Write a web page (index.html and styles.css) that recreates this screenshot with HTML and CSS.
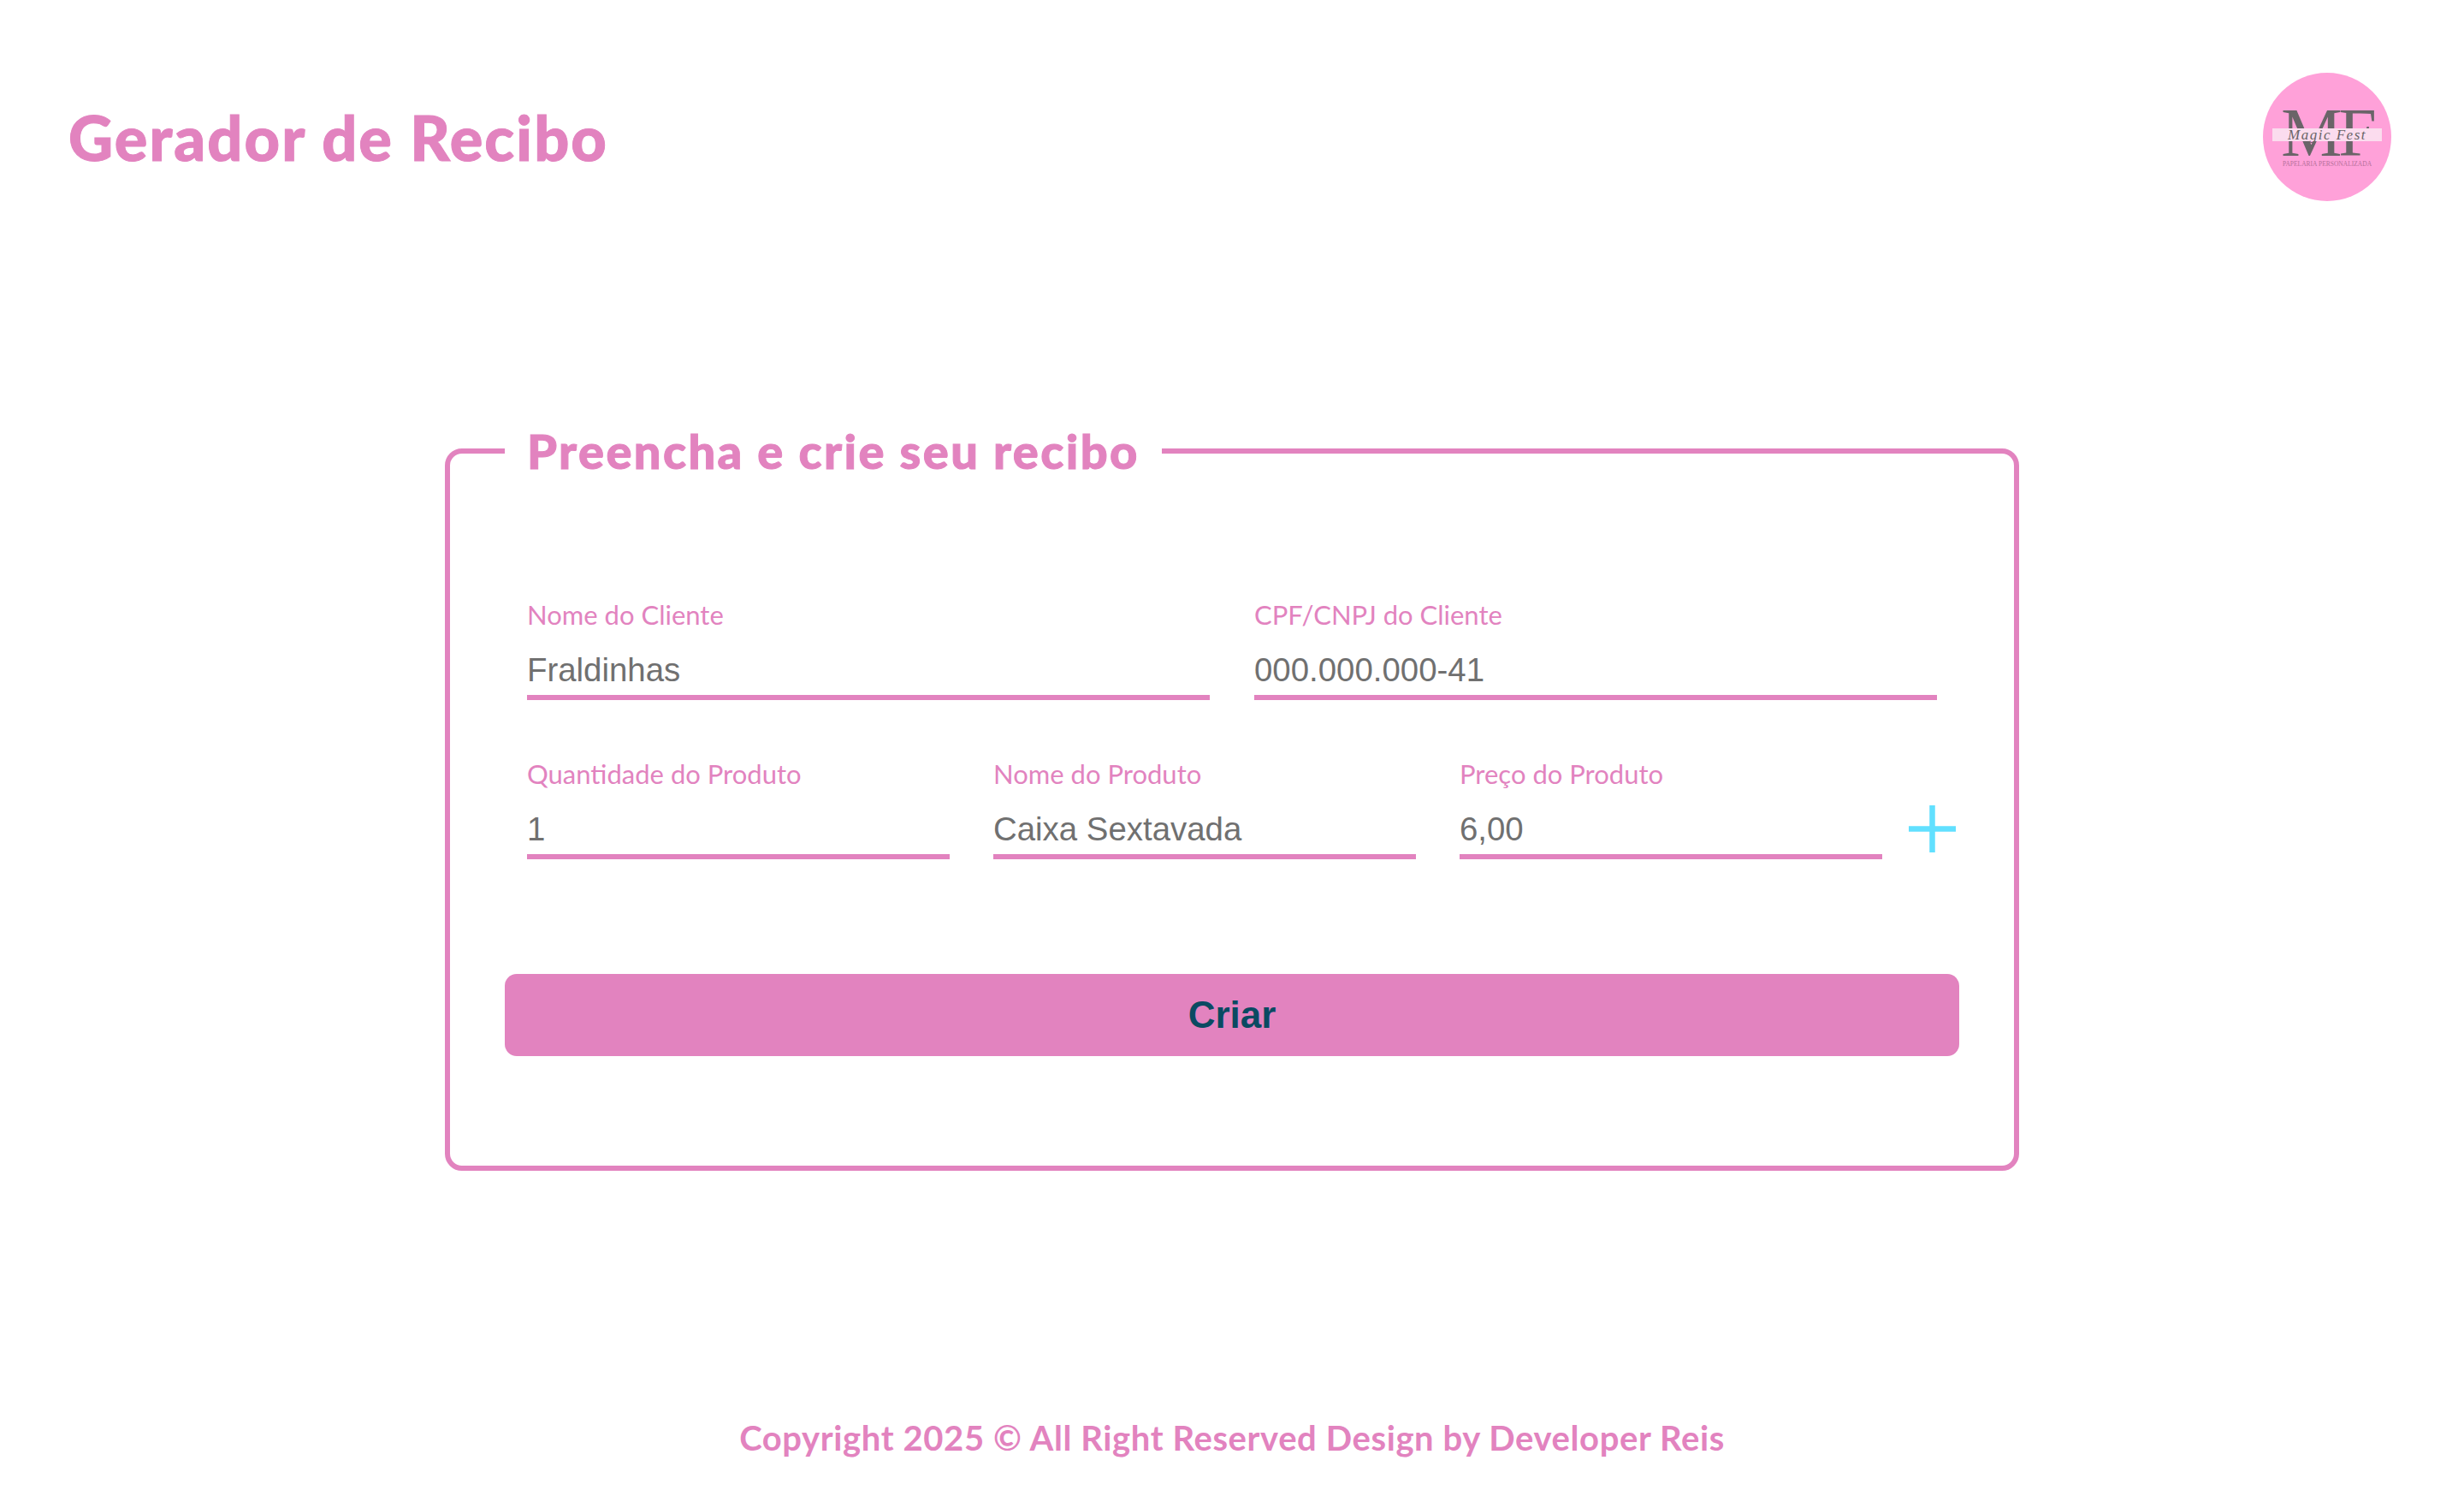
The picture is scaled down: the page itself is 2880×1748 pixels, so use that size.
FILE: index.html
```html
<!DOCTYPE html>
<html lang="pt-BR">

<head>
    <meta charset="UTF-8">
    <meta name="viewport" content="width=device-width, initial-scale=1.0">
    <title>Gerador de Recibo</title>
    <link rel="stylesheet" href="styles.css">
</head>

<body>
    <header class="topo">
        <h1>Gerador de Recibo</h1>
        <svg class="logo" viewBox="0 0 150 150" role="img" aria-label="Magic Fest">
            <circle cx="75" cy="75" r="75" fill="#ffa1d9" />
            <text class="logo-mf" x="75" y="97" text-anchor="middle">MF</text>
            <rect x="11" y="65" width="128" height="15" fill="#fbdcee" />
            <text class="logo-nome" x="75" y="78" text-anchor="middle">Magic Fest</text>
            <text class="logo-sub" x="75" y="109" text-anchor="middle">PAPELARIA PERSONALIZADA</text>
        </svg>
    </header>

    <main class="conteudo">
        <form>
            <fieldset class="cartao">
                <legend>Preencha e crie seu recibo</legend>

                <div class="linha-cliente">
                    <div class="campo">
                        <label for="cliente">Nome do Cliente</label>
                        <input id="cliente" type="text" value="Fraldinhas">
                    </div>
                    <div class="campo">
                        <label for="documento">CPF/CNPJ do Cliente</label>
                        <input id="documento" type="text" value="000.000.000-41">
                    </div>
                </div>

                <div class="linha-produto">
                    <div class="campo">
                        <label for="quantidade">Quantidade do Produto</label>
                        <input id="quantidade" type="text" value="1">
                    </div>
                    <div class="campo">
                        <label for="produto">Nome do Produto</label>
                        <input id="produto" type="text" value="Caixa Sextavada">
                    </div>
                    <div class="campo">
                        <label for="preco">Preço do Produto</label>
                        <input id="preco" type="text" value="6,00">
                    </div>
                    <button type="button" class="adicionar" aria-label="Adicionar produto">
                        <svg viewBox="0 0 55 55" width="55" height="55">
                            <path d="M27.5 0V55M0 27.5H55" stroke="#61e0ff" stroke-width="6.5" fill="none" />
                        </svg>
                    </button>
                </div>

                <button type="button" class="criar">Criar</button>
            </fieldset>
        </form>
    </main>

    <footer class="rodape">Copyright 2025 © All Right Reserved Design by Developer Reis</footer>
</body>

</html>
```

FILE: styles.css
```css
body {
    margin: 0;
    height: 1748px;
    display: flex;
    flex-direction: column;
    background-color: #fff;
    font-family: Lato, "Liberation Sans", sans-serif;
    color: #e283bf;
}

/* Topo */
.topo {
    display: flex;
    justify-content: space-between;
    align-items: center;
    padding: 85px 85px 0 80px;
}

.topo h1 {
    margin: 0;
    font-size: 72px;
    font-weight: 900;
    letter-spacing: 2.1px;
    -webkit-text-stroke: 1px #e283bf;
}

.logo {
    width: 150px;
    height: 150px;
}

.logo-mf {
    font-family: "Liberation Serif", serif;
    font-size: 80px;
    letter-spacing: -4px;
    fill: #6a6468;
}

.logo-nome {
    font-family: "Liberation Serif", serif;
    font-style: italic;
    font-size: 17px;
    letter-spacing: 1.5px;
    fill: #6a6468;
}

.logo-sub {
    font-family: "Liberation Serif", serif;
    font-size: 7.5px;
    fill: #b5709a;
}

/* Cartao */
.conteudo {
    display: flex;
    justify-content: center;
    padding-top: 257px;
}

.cartao {
    box-sizing: border-box;
    width: 1840px;
    margin: 0;
    padding: 136px 64px 128px;
    border: 6px solid #e283bf;
    border-radius: 20px;
}

legend {
    padding: 0 26px;
    font-size: 56px;
    font-weight: 900;
    line-height: 70px;
    letter-spacing: 2.4px;
    -webkit-text-stroke: 1px #e283bf;
}

.linha-cliente {
    display: flex;
    gap: 52px;
    margin: 0 0 66px 26px;
}

.linha-cliente .campo {
    flex: 0 0 798px;
}

.linha-produto {
    display: flex;
    gap: 51px;
    align-items: flex-end;
    margin-left: 26px;
}

.linha-produto .campo {
    flex: 0 0 494px;
}

.campo label {
    display: block;
    margin-bottom: 14px;
    font-size: 31px;
    line-height: 40px;
}

.campo input {
    box-sizing: border-box;
    display: block;
    width: 100%;
    height: 66px;
    padding: 2px 0 0;
    border: 0;
    border-bottom: 6px solid #e283bf;
    outline: none;
    font-family: "Liberation Sans", Arial, sans-serif;
    font-size: 38.4px;
    color: #707070;
}

.adicionar {
    flex: 0 0 55px;
    height: 55px;
    margin: 0 0 8px -20px;
    padding: 0;
    border: 0;
    background: none;
    cursor: pointer;
}

.adicionar svg {
    display: block;
}

.criar {
    display: block;
    width: 100%;
    height: 96px;
    margin-top: 134px;
    border: 0;
    border-radius: 14px;
    background-color: #e283bf;
    font-family: "Liberation Sans", Arial, sans-serif;
    font-size: 44px;
    font-weight: 700;
    color: #0a4a62;
    cursor: pointer;
}

/* Rodape */
.rodape {
    margin-top: auto;
    padding-bottom: 44px;
    text-align: center;
    font-size: 40px;
    font-weight: 700;
    letter-spacing: 0.6px;
}
```
